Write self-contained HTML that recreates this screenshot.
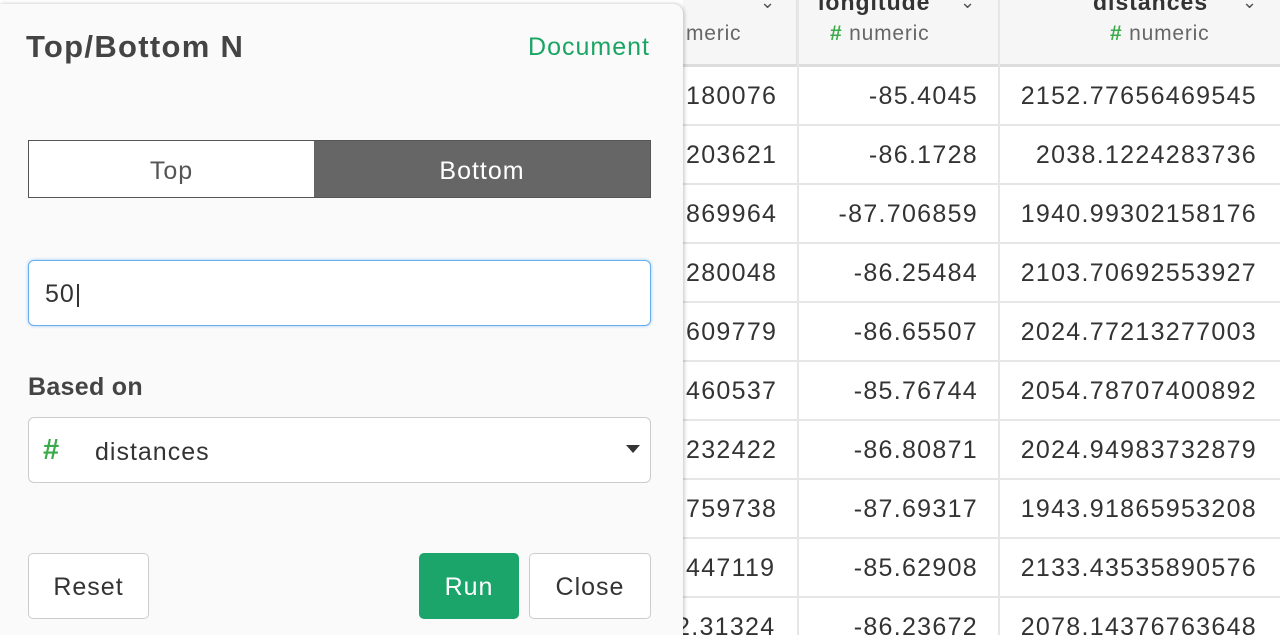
<!DOCTYPE html>
<html><head><style>
html,body{margin:0;width:1280px;height:635px;overflow:hidden}
body{background:#fff;font-family:"Liberation Sans",sans-serif;position:relative}
.hdr{position:absolute;top:0;height:64px;background:#f6f6f6;border-right:2px solid #e2e2e2;box-sizing:border-box}
.hl{position:absolute;top:-11px;font-weight:bold;font-size:23px;color:#333;letter-spacing:1px}
.hs{position:absolute;top:22px;font-size:21px;color:#666;letter-spacing:.8px}
.hs b{color:#3aaa4a;font-weight:bold}
.chev{position:absolute;top:-8px;font-size:18px;color:#555}
.row{position:absolute;left:0;width:1280px;height:59px;border-bottom:2px solid #e6e6e6;box-sizing:border-box}
.c{position:absolute;top:15px;font-size:25px;color:#333;text-align:right;letter-spacing:1.3px}
.vl{position:absolute;top:0;width:2px;height:635px;background:#e6e6e6}
.panel{position:absolute;left:0;top:4px;width:683px;height:631px;background:#fafafa;border-radius:0 10px 0 0;box-shadow:1px 0 4px rgba(0,0,0,.25);letter-spacing:1px}
.btn{position:absolute;box-sizing:border-box;border:1.5px solid #ccc;border-radius:5px;background:#fff;font-size:25px;color:#333;text-align:center}
</style></head><body>
<div class="hdr" style="left:683px;width:115px"></div>
<div class="hdr" style="left:798px;width:202px"></div>
<div class="hdr" style="left:1000px;width:280px;border-right:none"></div>
<div style="position:absolute;left:683px;top:64px;width:597px;height:3px;background:#ddd"></div>
<div class="hs" style="left:686px">meric</div>
<div class="hl" style="left:818px">longitude</div><div class="chev" style="left:960px">&#8964;</div>
<div class="hs" style="left:830px"><b>#</b> numeric</div>
<div class="hl" style="left:1093px">distances</div><div class="chev" style="left:1242px">&#8964;</div>
<div class="hs" style="left:1110px"><b>#</b> numeric</div>
<div class="chev" style="left:760px">&#8964;</div>
<div class="vl" style="left:797px;top:0"></div><div class="vl" style="left:998px"></div>
<div style="position:absolute;left:0;top:67px">
<div class="row" style="top:0"><span class="c" style="left:686px">180076</span><span class="c" style="right:302px">-85.4045</span><span class="c" style="right:23px">2152.77656469545</span></div>
<div class="row" style="top:59px"><span class="c" style="left:686px">203621</span><span class="c" style="right:302px">-86.1728</span><span class="c" style="right:23px">2038.1224283736</span></div>
<div class="row" style="top:118px"><span class="c" style="left:686px">869964</span><span class="c" style="right:302px">-87.706859</span><span class="c" style="right:23px">1940.99302158176</span></div>
<div class="row" style="top:177px"><span class="c" style="left:686px">280048</span><span class="c" style="right:302px">-86.25484</span><span class="c" style="right:23px">2103.70692553927</span></div>
<div class="row" style="top:236px"><span class="c" style="left:686px">609779</span><span class="c" style="right:302px">-86.65507</span><span class="c" style="right:23px">2024.77213277003</span></div>
<div class="row" style="top:295px"><span class="c" style="left:686px">460537</span><span class="c" style="right:302px">-85.76744</span><span class="c" style="right:23px">2054.78707400892</span></div>
<div class="row" style="top:354px"><span class="c" style="left:686px">232422</span><span class="c" style="right:302px">-86.80871</span><span class="c" style="right:23px">2024.94983732879</span></div>
<div class="row" style="top:413px"><span class="c" style="left:686px">759738</span><span class="c" style="right:302px">-87.69317</span><span class="c" style="right:23px">1943.91865953208</span></div>
<div class="row" style="top:472px"><span class="c" style="left:686px">447119</span><span class="c" style="right:302px">-85.62908</span><span class="c" style="right:23px">2133.43535890576</span></div>
<div class="row" style="top:531px"><span class="c" style="left:676px">2.31324</span><span class="c" style="right:302px">-86.23672</span><span class="c" style="right:23px">2078.14376763648</span></div>
</div>
<div class="panel">
<div style="position:absolute;left:26px;top:25px;font-size:31px;color:#444;font-weight:bold;letter-spacing:1.3px">Top/Bottom N</div>
<div style="position:absolute;right:33px;top:29px;font-size:25px;color:#1aa564">Document</div>
<div style="position:absolute;left:28px;top:136px;width:623px;height:58px;border:1.5px solid #555;box-sizing:border-box;display:flex">
<div style="flex:0 0 285px;background:#fff;text-align:center;line-height:60px;font-size:25px;color:#555">Top</div>
<div style="flex:1;background:#666;text-align:center;line-height:60px;font-size:25px;color:#fff">Bottom</div></div>
<div style="position:absolute;left:28px;top:256px;width:623px;height:66px;border:1.5px solid #66aff0;border-radius:6px;box-sizing:border-box;background:#fff;box-shadow:0 0 3px #9cc9f3;font-size:25px;color:#333;padding:19px 0 0 16px">50|</div>
<div style="position:absolute;left:28px;top:369px;font-size:25px;color:#444;font-weight:bold;letter-spacing:.3px">Based on</div>
<div style="position:absolute;left:28px;top:413px;width:623px;height:66px;border:1.5px solid #ccc;border-radius:6px;box-sizing:border-box;background:#fff">
<span style="position:absolute;left:14px;top:16px;font-size:29px;color:#3aaa4a;font-weight:bold">#</span>
<span style="position:absolute;left:66px;top:20px;font-size:25px;color:#333">distances</span>
<span style="position:absolute;right:10px;top:27px;border-left:7px solid transparent;border-right:7px solid transparent;border-top:8px solid #333"></span></div>
<div class="btn" style="left:28px;top:549px;width:121px;height:66px;line-height:67px">Reset</div>
<div class="btn" style="left:419px;top:549px;width:100px;height:66px;line-height:67px;background:#1ba56a;border-color:#1ba56a;color:#fff">Run</div>
<div class="btn" style="left:529px;top:549px;width:122px;height:66px;line-height:67px">Close</div>
</div>
</body></html>
